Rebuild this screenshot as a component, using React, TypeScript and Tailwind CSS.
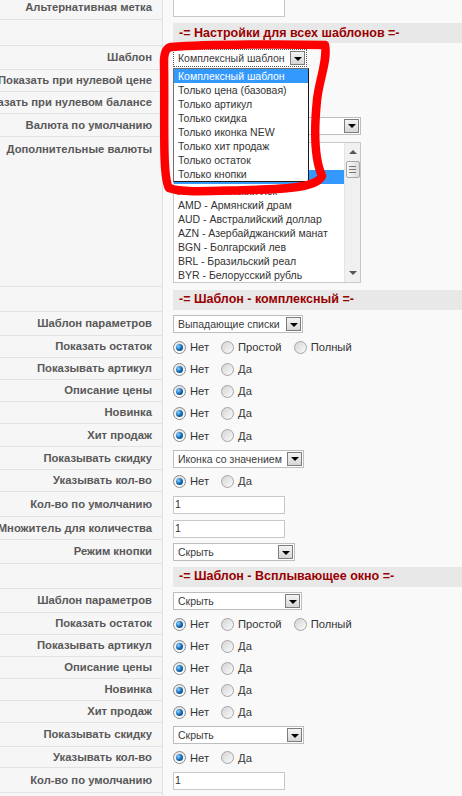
import React from "react";

const Arrow = () => (
  <span className="w-[15px] h-[14px] m-[1px] shrink-0 border border-[#7c7c7c] bg-gradient-to-b from-[#f4f4f4] to-[#d6d6d6] flex items-center justify-center">
    <span className="w-0 h-0 border-l-[4px] border-r-[4px] border-t-[4px] border-l-transparent border-r-transparent border-t-black mt-[1px]" />
  </span>
);

const Select = ({ w, text, focused }: { w: string; text: string; focused?: boolean }) => (
  <div
    className={`${w} h-[18px] bg-white flex items-center ${
      focused ? "border border-dotted border-[#555]" : "border border-[#bdbdbd]"
    }`}
  >
    <span className="flex-1 pl-[4px] text-[10.5px] leading-[16px] text-[#3a3a3a] whitespace-nowrap overflow-hidden">{text}</span>
    <Arrow />
  </div>
);

const Input = ({ value }: { value?: string }) => (
  <div className="w-[112px] h-[18px] bg-white border border-[#c8c8c8] flex items-center pl-[1px] text-[10.5px] text-[#333]">
    {value}
  </div>
);

const Radio = ({ checked }: { checked?: boolean }) =>
  checked ? (
    <span className="w-[13px] h-[13px] rounded-full border border-[#8a8a8a] bg-gradient-to-b from-[#e4e4e4] to-white flex items-center justify-center shrink-0">
      <span className="w-[7px] h-[7px] rounded-full bg-[radial-gradient(circle_at_35%_35%,#8fd0ff,#0c63ae_55%,#073f72)]" />
    </span>
  ) : (
    <span className="w-[13px] h-[13px] rounded-full border border-[#a4a4a4] bg-gradient-to-br from-[#d4d4d4] to-[#fbfbfb] shrink-0" />
  );

const Radios = ({ opts }: { opts: string[] }) => (
  <div className="flex items-center">
    {opts.map((o, i) => (
      <label key={o} className="flex items-center gap-[4px] mr-[12px]">
        <Radio checked={i === 0} />
        <span className="text-[11.2px] text-[#333] leading-[14px]">{o}</span>
      </label>
    ))}
  </div>
);

const Row = ({
  label,
  h,
  top,
  children,
}: {
  label?: string;
  h: string;
  top?: boolean;
  children?: React.ReactNode;
}) => (
  <div className={`flex ${h}`}>
    <div
      className={`w-[163px] shrink-0 border-r border-b border-[#e2e2e2] bg-[#f6f6f6] flex justify-end pr-[10px] overflow-hidden whitespace-nowrap text-[11.25px] font-bold text-[#595959] ${
        top ? "items-start pt-[4px]" : "items-center"
      }`}
    >
      {label}
    </div>
    <div className={`flex-1 pl-[10px] flex relative ${top ? "items-start pt-[5px]" : "items-center"}`}>{children}</div>
  </div>
);

const Header = ({ text, h }: { text: string; h: string }) => (
  <Row h={h}>
    <div className="flex-1 h-[20px] bg-[#e8e8e8] flex items-center pl-[6px] text-[12.5px] font-bold text-[#990000] whitespace-nowrap">
      {text}
    </div>
  </Row>
);

const NY = ["Нет", "Да"];
const NPP = ["Нет", "Простой", "Полный"];

const dropdownItems = [
  "Комплексный шаблон",
  "Только цена (базовая)",
  "Только артикул",
  "Только скидка",
  "Только иконка NEW",
  "Только хит продаж",
  "Только остаток",
  "Только кнопки",
];

const currencies = [
  "",
  "",
  "",
  "ALL - Албанский лек",
  "AMD - Армянский драм",
  "AUD - Австралийский доллар",
  "AZN - Азербайджанский манат",
  "BGN - Болгарский лев",
  "BRL - Бразильский реал",
  "BYR - Белорусский рубль",
];

export default function App() {
  return (
    <div className="w-[462px] h-[796px] overflow-hidden relative bg-[#f9f9f9] font-['Liberation_Sans',Arial,sans-serif]">
      <div className="-mt-[4px]">
        <Row label="Альтернативная метка" h="h-[24px]">
          <Input />
        </Row>
        <Header text="-= Настройки для всех шаблонов =-" h="h-[26px]" />
        <Row label="Шаблон" h="h-[24px]">
          <div className="relative">
            <Select w="w-[134px]" text="Комплексный шаблон" focused />
            <div className="absolute left-0 top-full mt-[1px] w-[136px] z-10 bg-white border border-[#1a1a1a] border-l-[#707070] border-t-[#707070]">
              {dropdownItems.map((t, i) => (
                <div
                  key={t}
                  className={`h-[14px] leading-[14px] pl-[4px] text-[10.5px] whitespace-nowrap ${
                    i === 0 ? "bg-[#3399ff] text-white" : "text-[#333]"
                  }`}
                >
                  {t}
                </div>
              ))}
            </div>
          </div>
        </Row>
        <Row label="Показать при нулевой цене" h="h-[22px]" />
        <Row label="Показать при нулевом балансе" h="h-[22px]" />
        <Row label="Валюта по умолчанию" h="h-[23px]">
          <Select w="w-[188px]" text="" />
        </Row>
        <Row label="Дополнительные валюты" h="h-[150px]" top>
          <div className="w-[188px] h-[141px] bg-white border border-[#c8c8c8] flex">
            <div className="flex-1 flex flex-col">
              {currencies.map((c, i) => (
                <div
                  key={i}
                  className={`h-[14px] leading-[14px] pl-[4px] text-[10.5px] whitespace-nowrap ${
                    i === 2 ? "bg-[#3399ff] text-white" : "text-[#333]"
                  }`}
                >
                  {c}
                </div>
              ))}
            </div>
            <div className="w-[16px] bg-[#f0f0f0] border-l border-[#e4e4e4] flex flex-col items-center">
              <div className="h-[18px] flex items-center justify-center">
                <span className="w-0 h-0 border-l-[4px] border-r-[4px] border-b-[4px] border-l-transparent border-r-transparent border-b-[#555]" />
              </div>
              <div className="w-[14px] h-[17px] border border-[#a8a8a8] rounded-[2px] bg-gradient-to-r from-[#f8f8f8] to-[#dcdcdc] flex flex-col items-center justify-center gap-[2px]">
                <span className="w-[7px] h-[1px] bg-[#777]" />
                <span className="w-[7px] h-[1px] bg-[#777]" />
                <span className="w-[7px] h-[1px] bg-[#777]" />
              </div>
              <div className="flex-1" />
              <div className="h-[18px] flex items-center justify-center">
                <span className="w-0 h-0 border-l-[4px] border-r-[4px] border-t-[4px] border-l-transparent border-r-transparent border-t-[#555]" />
              </div>
            </div>
          </div>
        </Row>
        <Header text="-= Шаблон - комплексный =-" h="h-[25px]" />
        <Row label="Шаблон параметров" h="h-[24px]">
          <Select w="w-[130px]" text="Выпадающие списки" />
        </Row>
        <Row label="Показать остаток" h="h-[22px]">
          <Radios opts={NPP} />
        </Row>
        <Row label="Показывать артикул" h="h-[22px]">
          <Radios opts={NY} />
        </Row>
        <Row label="Описание цены" h="h-[22px]">
          <Radios opts={NY} />
        </Row>
        <Row label="Новинка" h="h-[22px]">
          <Radios opts={NY} />
        </Row>
        <Row label="Хит продаж" h="h-[23px]">
          <Radios opts={NY} />
        </Row>
        <Row label="Показывать скидку" h="h-[23px]">
          <Select w="w-[131px]" text="Иконка со значением" />
        </Row>
        <Row label="Указывать кол-во" h="h-[22px]">
          <Radios opts={NY} />
        </Row>
        <Row label="Кол-во по умолчанию" h="h-[25px]">
          <Input value="1" />
        </Row>
        <Row label="Множитель для количества" h="h-[23px]">
          <Input value="1" />
        </Row>
        <Row label="Режим кнопки" h="h-[24px]">
          <Select w="w-[122px]" text="Скрыть" />
        </Row>
        <Header text="-= Шаблон - Всплывающее окно =-" h="h-[25px]" />
        <Row label="Шаблон параметров" h="h-[24px]">
          <Select w="w-[129px]" text="Скрыть" />
        </Row>
        <Row label="Показать остаток" h="h-[22px]">
          <Radios opts={NPP} />
        </Row>
        <Row label="Показывать артикул" h="h-[22px]">
          <Radios opts={NY} />
        </Row>
        <Row label="Описание цены" h="h-[22px]">
          <Radios opts={NY} />
        </Row>
        <Row label="Новинка" h="h-[22px]">
          <Radios opts={NY} />
        </Row>
        <Row label="Хит продаж" h="h-[22px]">
          <Radios opts={NY} />
        </Row>
        <Row label="Показывать скидку" h="h-[24px]">
          <Select w="w-[131px]" text="Скрыть" />
        </Row>
        <Row label="Указывать кол-во" h="h-[21px]">
          <Radios opts={NY} />
        </Row>
        <Row label="Кол-во по умолчанию" h="h-[25px]">
          <Input value="1" />
        </Row>
        <Row h="h-[23px]" />
      </div>
      <svg className="absolute left-0 top-0 pointer-events-none z-20" width="462" height="796" viewBox="0 0 462 796">
        <path
          d="M 171 47 C 210 44, 290 44, 325 45 C 328 60, 319 80, 317 100 C 314 130, 314 158, 322 176 C 317 187, 290 189, 250 190 C 210 191, 182 193, 169 188 C 162 176, 165 120, 164 62 C 164 52, 166 48, 171 47 Z"
          fill="none"
          stroke="#ff0000"
          strokeWidth="8.5"
          strokeLinejoin="round"
          strokeLinecap="round"
        />
      </svg>
    </div>
  );
}
